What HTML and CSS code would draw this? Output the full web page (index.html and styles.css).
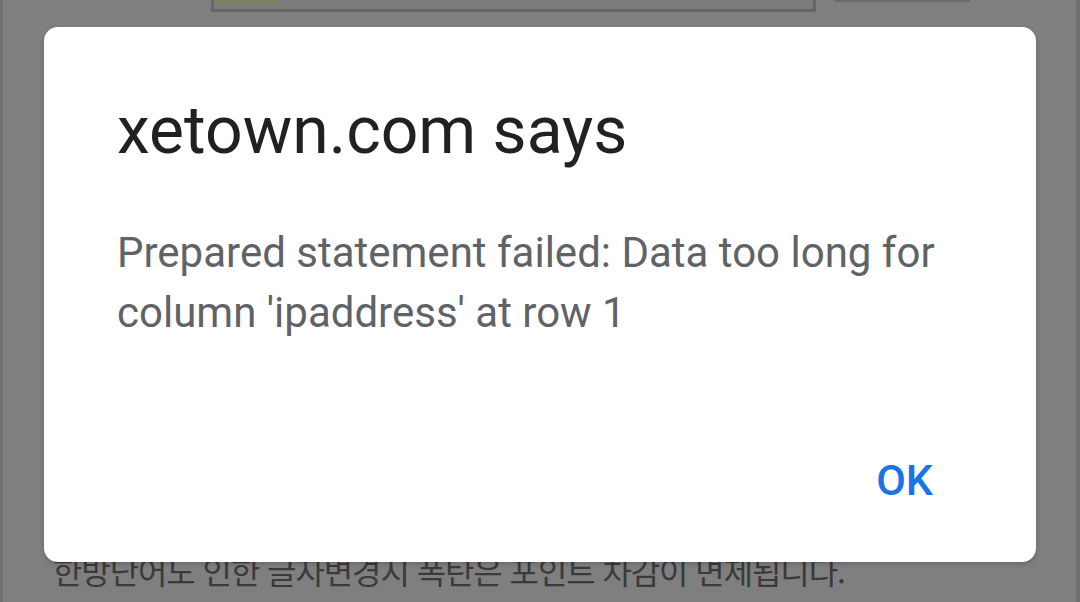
FILE: index.html
```html
<!DOCTYPE html>
<html lang="ko">
<head>
<meta charset="utf-8">
<link rel="stylesheet" href="styles.css">
</head>
<body>
<div class="page">
  <div class="toprow">
    <div class="field"><div class="field-fill"></div></div>
    <div class="btn-edge"></div>
  </div>
  <div class="spacer"></div>
  <p class="notice">한방단어도 인한 글자변경시 폭탄은 포인트 차감이 면제됩니다.</p>
</div>
<div class="dialog" role="alertdialog">
  <h1 class="dialog-title">xetown.com says</h1>
  <p class="dialog-msg">Prepared statement failed: Data too long for column 'ipaddress' at row 1</p>
  <div class="dialog-actions">
    <span class="dialog-ok">OK</span>
  </div>
</div>
</body>
</html>
```
FILE: styles.css
```css
html, body {
  margin: 0;
  padding: 0;
}
body {
  width: 1080px;
  height: 602px;
  overflow: hidden;
  background: #7f7f7f;
  font-family: Roboto, "Noto Sans", sans-serif;
  position: relative;
}
.page {
  height: 602px;
  box-sizing: border-box;
  border-left: 3px solid #6f6f6f;
  border-right: 4px solid #6f6f6f;
  display: flex;
  flex-direction: column;
}
.toprow {
  display: flex;
  align-items: flex-start;
  padding-left: 208px;
}
.field {
  width: 599px;
  height: 9px;
  border: 3px solid #666666;
  border-top: none;
  background: #7c7c7c;
  position: relative;
}
.field-fill {
  width: 63px;
  height: 3px;
  background: #80805c;
  margin-left: 1px;
}
.btn-edge {
  margin-left: 19px;
  width: 135px;
  height: 2px;
  background: #6a6a6a;
}
.spacer {
  flex: 1;
}
.notice {
  margin: 0 0 14px 50px;
  font-family: "Noto Sans CJK KR", sans-serif;
  font-size: 32px;
  line-height: 36px;
  letter-spacing: -1.1px;
  color: #3a3a3a;
}
.dialog {
  position: absolute;
  left: 44px;
  top: 27px;
  width: 992px;
  height: 535px;
  box-sizing: border-box;
  background: #ffffff;
  border-radius: 14px;
  box-shadow: 0 2px 5px rgba(0,0,0,0.18);
  padding: 0 73px;
  display: flex;
  flex-direction: column;
}
.dialog-title {
  margin: 64px 0 0;
  font-weight: 400;
  font-size: 66px;
  line-height: 80px;
  color: #202124;
}
.dialog-msg {
  margin: 52px 0 0;
  font-size: 42px;
  line-height: 60px;
  color: #5f6368;
}
.dialog-actions {
  margin-top: auto;
  margin-bottom: 58px;
  display: flex;
  justify-content: flex-end;
  padding-right: 30px;
}
.dialog-ok {
  font-size: 43px;
  font-weight: 500;
  color: #1a73e8;
  line-height: 48px;
}
```
